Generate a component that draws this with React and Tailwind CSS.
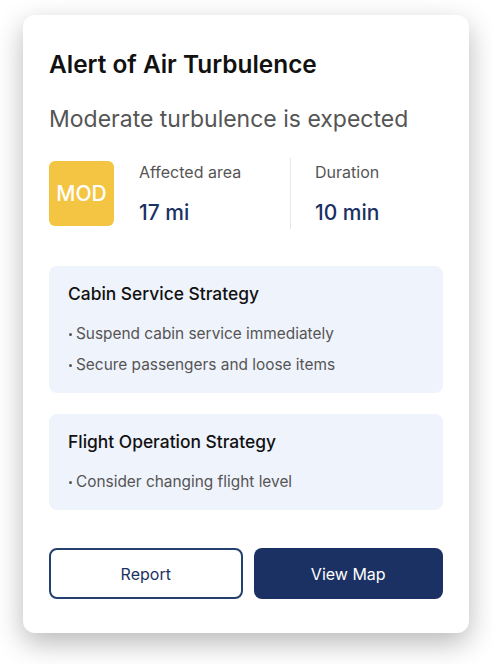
export default function App() {
    const strategies = [
        {
            title: "Cabin Service Strategy",
            items: [
                "Suspend cabin service immediately",
                "Secure passengers and loose items",
            ],
        },
        {
            title: "Flight Operation Strategy",
            items: ["Consider changing flight level"],
        },
    ];

    return (
        <div className="w-[492px] h-[664px] bg-white pt-[15px] pl-[23px] font-['Inter',sans-serif]">
            <div className="w-[446px] h-[618px] bg-white rounded-[12px] shadow-[0_10px_28px_rgba(0,0,0,0.28)] pt-[33px] pl-[26px] pr-[26px] pb-[34px] flex flex-col">
                <h1 className="text-[24.4px] leading-[32px] font-semibold text-[#111111]">
                    Alert of Air Turbulence
                </h1>
                <p className="mt-[23px] text-[23px] leading-[32px] text-[#555555]">
                    Moderate turbulence is expected
                </p>

                <div className="mt-[23px] flex items-center">
                    <div className="w-[65px] h-[65px] rounded-[6px] bg-[#F4C542] flex items-center justify-center text-white text-[21px] font-medium">
                        MOD
                    </div>
                    <div className="flex-1 flex ml-[25px]">
                        <div className="w-[151px] py-[2px]">
                            <div className="text-[16px] leading-[24px] text-[#555555]">
                                Affected area
                            </div>
                            <div className="mt-[15px] text-[21px] leading-[28px] font-medium text-[#1B3163]">
                                17 mi
                            </div>
                        </div>
                        <div className="flex-1 py-[2px] pl-6 border-l border-[#E5E7EB]">
                            <div className="text-[16px] leading-[24px] text-[#555555]">
                                Duration
                            </div>
                            <div className="mt-[15px] text-[21px] leading-[28px] font-medium text-[#1B3163]">
                                10 min
                            </div>
                        </div>
                    </div>
                </div>

                <div className="mt-[37px] flex flex-col gap-[21px]">
                    {strategies.map(({ title, items }) => (
                        <div
                            key={title}
                            className="bg-[#EFF3FB] rounded-[8px] pt-4 pb-4 px-[19px]"
                        >
                            <div className="text-[17.4px] leading-[24px] font-medium text-[#111111]">
                                {title}
                            </div>
                            <ul className="mt-4 flex flex-col gap-[7px]">
                                {items.map((item) => (
                                    <li
                                        key={item}
                                        className="text-[15.4px] leading-[24px] text-[#555555] flex items-center"
                                    >
                                        <span className="w-[3px] h-[3px] rounded-full bg-[#555555] ml-[1px] mr-[4px] mt-[1px]" />
                                        {item}
                                    </li>
                                ))}
                            </ul>
                        </div>
                    ))}
                </div>

                <div className="mt-auto flex gap-[11px]">
                    <button className="flex-1 h-[51px] rounded-[8px] border-2 border-[#23406E] text-[#1B3163] text-[16px]">
                        Report
                    </button>
                    <button className="flex-1 h-[51px] rounded-[8px] bg-[#1B3163] text-white text-[16px]">
                        View Map
                    </button>
                </div>
            </div>
        </div>
    );
}
